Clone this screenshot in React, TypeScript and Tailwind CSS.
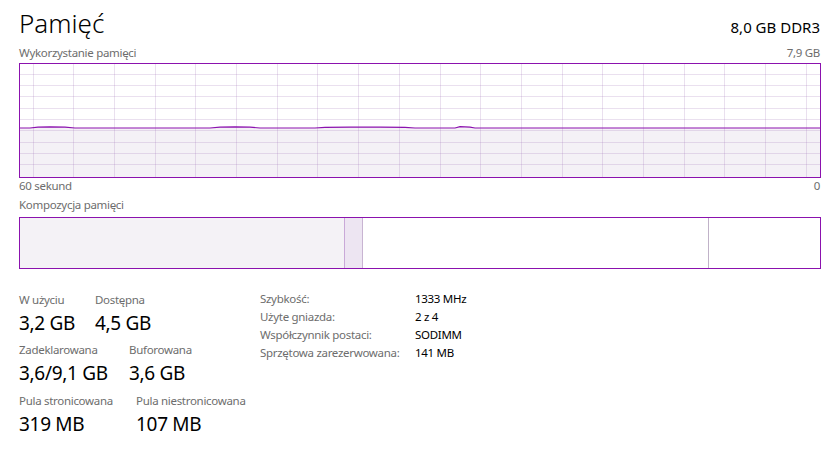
import React from "react";

const PURPLE = "#8b12ae";

function UsageChart() {
  const W = 800;
  const H = 113;
  const vLines: number[] = [];
  for (let k = 0; k < 20; k++) vLines.push(13 + k * 40.7);
  const hLines: number[] = [];
  for (let k = 1; k < 10; k++) hLines.push(k * 11.3 - 1);
  const y = 64;
  const pts: [number, number][] = [
    [0, y], [10, y], [18, y - 0.8], [30, y - 1.2], [45, y - 0.8], [55, y], [190, y],
    [200, y - 0.8], [215, y - 1.2], [230, y - 0.8], [240, y], [295, y], [305, y - 0.7],
    [330, y - 0.9], [360, y - 0.9], [385, y - 0.6], [395, y], [435, y], [440, y - 1.3],
    [450, y - 0.8], [455, y], [W, y],
  ];
  const line = pts.map((p, i) => `${i === 0 ? "M" : "L"}${p[0]},${p[1]}`).join(" ");
  const fill = `${line} L${W},${H} L0,${H} Z`;
  return (
    <svg width={W} height={H} viewBox={`0 0 ${W} ${H}`} className="block">
      <path d={fill} fill="#f4f1f6" />
      {vLines.map((x) => (
        <line key={`v${x}`} x1={x} x2={x} y1={0} y2={H} stroke="#a070b8" strokeOpacity={0.22} strokeWidth={1} shapeRendering="crispEdges" />
      ))}
      {hLines.map((yy) => (
        <line key={`h${yy}`} x1={0} x2={W} y1={yy} y2={yy} stroke="#a070b8" strokeOpacity={0.22} strokeWidth={1} shapeRendering="crispEdges" />
      ))}
      <path d={line} fill="none" stroke={PURPLE} strokeWidth={1.2} />
    </svg>
  );
}

function Stat({ label, value, w }: { label: string; value: string; w: string }) {
  return (
    <div className={w}>
      <div className="text-[11.5px] leading-[16px] tracking-[-0.3px] text-[#6d6d6d] whitespace-nowrap">{label}</div>
      <div className="mt-[2px] text-[19px] leading-[26px] tracking-[-0.3px] text-black whitespace-nowrap">{value}</div>
    </div>
  );
}

export default function App() {
  const rows: [string, string][] = [
    ["Szybkość:", "1333 MHz"],
    ["Użyte gniazda:", "2 z 4"],
    ["Współczynnik postaci:", "SODIMM"],
    ["Sprzętowa zarezerwowana:", "141 MB"],
  ];
  return (
    <div className="w-[837px] h-[461px] bg-white overflow-hidden pl-[19px] pr-[17px] pt-[5px] font-[family-name:'Segoe_UI','Noto_Sans',sans-serif] text-black">
      <div className="flex items-baseline justify-between">
        <div className="text-[26px] leading-[36px] font-light">Pamięć</div>
        <div className="text-[15px] leading-[20px]">8,0 GB DDR3</div>
      </div>
      <div className="mt-[4px] flex justify-between text-[11.5px] leading-[16px] tracking-[-0.3px] text-[#6d6d6d]">
        <span>Wykorzystanie pamięci</span>
        <span>7,9 GB</span>
      </div>
      <div className="mt-[2px] border border-[#8b12ae] h-[115px] w-[802px]">
        <UsageChart />
      </div>
      <div className="flex justify-between text-[11.5px] leading-[16px] tracking-[-0.3px] text-[#6d6d6d]">
        <span>60 sekund</span>
        <span>0</span>
      </div>
      <div className="mt-[3px] text-[11.5px] leading-[16px] tracking-[-0.3px] text-[#6d6d6d]">Kompozycja pamięci</div>
      <div className="mt-[4px] border border-[#8b12ae] h-[52px] w-[802px] flex">
        <div className="w-[325px] bg-[#f4f2f6] border-r border-[#c9a9d8]" />
        <div className="w-[18px] bg-[#ede5f2] border-r border-[#c8b4d2]" />
        <div className="w-[346px] bg-white border-r border-[#c0b2c8]" />
        <div className="flex-1 bg-white" />
      </div>
      <div className="mt-[23px] flex">
        <div className="w-[241px] flex flex-col">
          <div className="flex">
            <Stat label="W użyciu" value="3,2 GB" w="w-[76px]" />
            <Stat label="Dostępna" value="4,5 GB" w="w-[80px]" />
          </div>
          <div className="mt-[6px] flex">
            <Stat label="Zadeklarowana" value="3,6/9,1 GB" w="w-[110px]" />
            <Stat label="Buforowana" value="3,6 GB" w="w-[80px]" />
          </div>
          <div className="mt-[7px] flex">
            <Stat label="Pula stronicowana" value="319 MB" w="w-[117px]" />
            <Stat label="Pula niestronicowana" value="107 MB" w="w-[120px]" />
          </div>
        </div>
        <div className="-mt-[2px] flex flex-col">
          {rows.map(([k, v]) => (
            <div key={k} className="flex text-[11.5px] leading-[18px] tracking-[-0.3px]">
              <span className="w-[155px] text-[#6d6d6d] whitespace-nowrap">{k}</span>
              <span className="text-black whitespace-nowrap">{v}</span>
            </div>
          ))}
        </div>
      </div>
    </div>
  );
}
